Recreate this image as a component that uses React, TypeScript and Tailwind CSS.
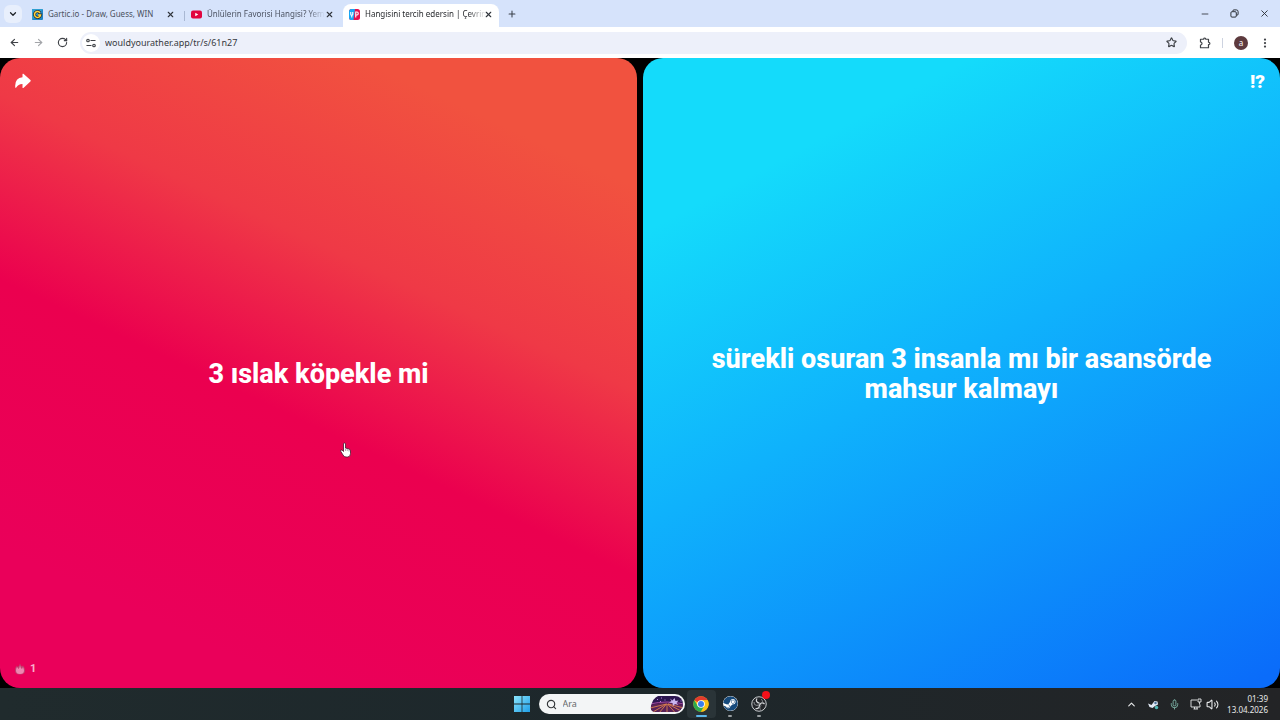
import React, { useState } from 'react';
import { ArrowLeft, ArrowRight, ChevronDown, ChevronUp, EllipsisVertical, Mic, Minus, Plus, RotateCw, Search, Star, Volume2, X } from 'lucide-react';
import { FaSteam } from 'react-icons/fa';

interface Tab {
  id: number;
  title: string;
  icon: React.ReactNode;
}

function GarticIcon() {
  return (
    <svg viewBox="0 0 22 22" className="size-[11px] shrink-0">
      <rect width="22" height="22" rx="2" fill="#1f86c4" />
      <path d="M0 0h22L0 22z" fill="#2f9fd0" />
      <path d="M16 7.5A6 6 0 1 0 17 12h-5" fill="none" stroke="#2b3038" strokeWidth="6" />
      <path d="M16 7.5A6 6 0 1 0 17 12h-5" fill="none" stroke="#ffd83c" strokeWidth="3" />
    </svg>
  );
}

function YoutubeIcon() {
  return (
    <svg viewBox="0 0 22 22" className="size-[11px] shrink-0">
      <rect y="3" width="22" height="16" rx="4" fill="#e1053f" />
      <path d="M8.5 7.5v7l6-3.5z" fill="#fff" />
    </svg>
  );
}

function RatherIcon() {
  return (
    <svg viewBox="0 0 22 22" className="size-[11px] shrink-0">
      <rect width="22" height="22" rx="5" fill="#e6104f" />
      <path d="M5 0h7L9 22H5a5 5 0 0 1-5-5V5a5 5 0 0 1 5-5z" fill="#17a8f5" />
      <path d="M3.5 6v4.5q0 2 2 2t2-2V6M5.5 12.5V17" fill="none" stroke="#fff" strokeWidth="2.2" />
      <path d="M13.5 17V6H16q2.5 0 2.5 3T16 12h-2.5" fill="none" stroke="#fff" strokeWidth="2.2" />
    </svg>
  );
}

function RestoreIcon() {
  return (
    <svg viewBox="0 0 20 20" className="size-[9px]" fill="none" stroke="currentColor" strokeWidth="2.2">
      <rect x="2" y="6" width="12" height="12" rx="2.5" />
      <path d="M6 5q0-3 3-3h5q4 0 4 4v5q0 3-3 3" />
    </svg>
  );
}

function ExtensionIcon() {
  return (
    <svg viewBox="0 0 24 24" className="size-3" fill="none" stroke="currentColor" strokeWidth="2.4">
      <path d="M3 4.5h6.500V4a2 2 0 0 1 4 0v.5H19v6h.5a2 2 0 0 1 0 4.500H19v6.500H3V16a3 3 0 0 0 0-6z" strokeLinejoin="round" />
    </svg>
  );
}

function TuneIcon() {
  return (
    <svg viewBox="0 0 20 20" className="size-[10px]" fill="none" stroke="#3f4247" strokeWidth="2.4">
      <circle cx="4" cy="5" r="2.5" />
      <path d="M9 5h10M1 15h10" />
      <circle cx="16" cy="15" r="2.5" />
    </svg>
  );
}

function ShareIcon() {
  return (
    <svg viewBox="0 0 32 32" className="size-4" fill="currentColor">
      <path d="M15 2.500q0-2 1.800-.8l14 12.500q1.200 1.300 0 2.600l-14 13q-1.800 1.200-1.800-1V22Q7 21.500 2.500 29 1 31 .5 28.500-1 10 15 8.500z" />
    </svg>
  );
}

function FlameIcon() {
  return (
    <svg viewBox="0 0 20 24" className="h-3 w-[10px]">
      <path d="M10 1q1 4 4 6l2-2q4 5 4 10 0 8-10 8T0 15Q0 9 4 5l1 3q4-2 5-7z" fill="#bd4470" />
      <path d="M10 5q1 5 4 7l2-4q2 4 2 7 0 7-8 7t-8-7q0-4 2-7l3 4q2-2 3-7z" fill="#ee86b2" />
    </svg>
  );
}

function WindowsIcon() {
  return (
    <svg viewBox="0 0 16 16" className="size-4">
      <defs>
        <linearGradient id="win" x1="0" y1="0" x2="1" y2="1">
          <stop offset="0" stopColor="#8be4fb" />
          <stop offset="1" stopColor="#1f9fe8" />
        </linearGradient>
      </defs>
      <path d="M0 0h7.6v7.6H0zM8.4 0H16v7.6H8.4zM0 8.4h7.6V16H0zM8.4 8.4H16V16H8.4z" fill="url(#win)" />
    </svg>
  );
}

function ChromeIcon() {
  return (
    <svg viewBox="0 0 48 48" className="size-4">
      <circle cx="24" cy="24" r="23" fill="#fbc116" />
      <path d="M24 24 4.100 12.500A23 23 0 0 1 43.900 12.500H24z" fill="#e33b2e" />
      <path d="M4.100 12.500A23 23 0 0 0 24 47L34 29.700 24 24 14 29.700z" fill="#2da94f" />
      <path d="M24 12.500h19.900A23 23 0 0 1 24 47l10-17.300z" fill="#fbc116" />
      <circle cx="24" cy="24" r="11.5" fill="#fff" />
      <circle cx="24" cy="24" r="9" fill="#3b7ded" />
    </svg>
  );
}

function ObsIcon() {
  return (
    <svg viewBox="0 0 32 32" className="size-4" fill="none">
      <circle cx="16" cy="16" r="14.5" fill="#23262a" stroke="#c9cccf" strokeWidth="2" />
      <path d="M12 5c-3 5 0 9 5 9M27 16c-4-4-9-2-10 3M9 25c6 1 9-3 7-8" stroke="#d5d8da" strokeWidth="2.5" />
      <path d="M6 12c0 6 4 8 9 6M20 6c4 3 4 8 0 10M19 27c-2-2-2-6 1-8" stroke="#8f9396" strokeWidth="2" />
    </svg>
  );
}

// Decorative picture at the end of the search box
function SearchArt() {
  return (
    <svg viewBox="0 0 68 36" className="h-[18px] w-[34px] shrink-0">
      <defs>
        <clipPath id="art">
          <path d="M16 2h34a16 16 0 0 1 0 32H8q-8-3-6-12Q6 6 16 2z" />
        </clipPath>
      </defs>
      <g clipPath="url(#art)">
        <rect width="68" height="36" fill="#2c1650" />
        <path d="M0 20q34-10 68 0v16H0z" fill="#5a2257" />
        <path d="M33 18 6 34M33 18 18 36M34 18v18M35 18l16 18M36 18l28 15M33 18 0 26M36 18l32 8" stroke="#d9814f" strokeWidth="1.8" />
        <path d="M0 18q34-8 68 0" stroke="#a44ba0" strokeWidth="2" fill="none" />
        <path d="M40 7l5 4 4-5 2 6 6-1-4 5 4 4-7-2-4 4-1-6-7-1 5-3z" fill="#c9b5ef" />
        <path d="M14 9h2M22 6h2M29 10h2M20 13h2M61 12h2" stroke="#b389e0" strokeWidth="2" />
      </g>
    </svg>
  );
}

function NetworkIcon() {
  return (
    <svg viewBox="0 0 24 24" className="ml-[10px] size-3" fill="none" stroke="#e8eaeb" strokeWidth="1.8">
      <path d="M14 4H2v14h18v-5M7 22h9M9 18v4M14 18v4" />
      <path d="M16 2h6v6h-6zM19 8v5" />
    </svg>
  );
}

function HandCursor() {
  return (
    <svg viewBox="0 0 22 32" className="h-4 w-[11px]">
      <path
        d="M7 3q2-2 4 0v9l7 2q3 1 3 4v5q0 7-6 7h-3q-4 0-6-4l-5-8q0-3 3-2l3 3z"
        fill="#fff"
        stroke="#4a1730"
        strokeWidth="1.6"
      />
      <path d="M11 13v5M14.500 14v4M18 15v4" stroke="#7c7480" strokeWidth="1.2" />
    </svg>
  );
}

const tabs: Tab[] = [
  { id: 1, title: 'Gartic.io - Draw, Guess, WIN', icon: <GarticIcon /> },
  { id: 2, title: 'Ünlülerin Favorisi Hangisi? Yem', icon: <YoutubeIcon /> },
  { id: 3, title: 'Hangisini tercih edersin | Çevrin', icon: <RatherIcon /> },
];

function TabItem({ tab, active, onSelect }: { tab: Tab; active: boolean; onSelect: () => void }) {
  return (
    <div
      className={
        active
          ? 'flex h-[23px] w-[156px] items-center rounded-t-lg bg-white px-1.5 pb-[3px] text-[#26282c]'
          : 'flex h-[23px] w-[159px] items-center pr-[9px] pb-[3px] pl-[7px] text-[#4b5261]'
      }
    >
      <button onClick={onSelect} className="flex min-w-0 flex-1 items-center gap-[5px]">
        {tab.icon}
        <span className={tab.id === 1 ? 'text-[8px] whitespace-nowrap' : 'mask-r-from-85% text-[8px] whitespace-nowrap'}>{tab.title}</span>
      </button>
      <button aria-label="Sekmeyi kapat" className="text-[#30343b]">
        <X size={9} strokeWidth={3} />
      </button>
    </div>
  );
}

function BrowserChrome() {
  const [activeTab, setActiveTab] = useState(3);
  const [url, setUrl] = useState('wouldyourather.app/tr/s/61n27');

  return (
    <header>
      <div className="flex h-[27px] items-end bg-[#d6e3fb]">
        <button aria-label="Sekme ara" className="mb-1 ml-1 flex size-[18px] items-center justify-center rounded-md bg-[#e8effc] text-[#1f2329]">
          <ChevronDown size={10} strokeWidth={3} />
        </button>
        <nav className="ml-[3px] flex items-center">
          {tabs.map((tab) => (
            <React.Fragment key={tab.id}>
              {tab.id === 2 && <div className="-mr-px h-[10px] w-px bg-[#a9b8d3]" />}
              <TabItem tab={tab} active={tab.id === activeTab} onSelect={() => setActiveTab(tab.id)} />
            </React.Fragment>
          ))}
        </nav>
        <button aria-label="Yeni sekme" className="mb-2 ml-2 text-[#3b404a]">
          <Plus size={10} strokeWidth={2.5} />
        </button>
        <div className="mb-2 ml-auto flex items-center gap-5 pr-[10px] text-[#2b2f36]">
          <button aria-label="Simge durumuna küçült"><Minus size={10} /></button>
          <button aria-label="Geri yükle"><RestoreIcon /></button>
          <button aria-label="Kapat"><X size={11} /></button>
        </div>
      </div>

      <div className="flex h-[31px] items-center bg-white px-[9px] text-[#3f4247]">
        <div className="flex items-center gap-[13px]">
          <button aria-label="Geri"><ArrowLeft size={11} strokeWidth={2.5} /></button>
          <button aria-label="İleri" className="text-[#a3a5a9]"><ArrowRight size={11} strokeWidth={2.5} /></button>
          <button aria-label="Yenile"><RotateCw size={11} strokeWidth={2.5} /></button>
        </div>
        <div className="ml-3 flex h-[22px] flex-1 items-center rounded-full bg-[#edf0fa] pr-[10px] pl-[2px]">
          <button aria-label="Site bilgileri" className="flex size-[18px] items-center justify-center rounded-full bg-white">
            <TuneIcon />
          </button>
          <input
            aria-label="Adres çubuğu"
            value={url}
            onChange={(e) => setUrl(e.target.value)}
            className="ml-[5px] min-w-0 flex-1 bg-transparent text-[9px] text-[#36393e] outline-none"
          />
          <button aria-label="Yer işareti"><Star size={11} strokeWidth={2.5} /></button>
        </div>
        <button aria-label="Uzantılar" className="ml-3">
          <ExtensionIcon />
        </button>
        <div className="mx-[11px] h-[10px] w-px bg-[#cdd3e0]" />
        <button aria-label="Profil" className="flex size-[14px] items-center justify-center rounded-full bg-[#5d3a3e] text-[8px] leading-none text-white">
          a
        </button>
        <button aria-label="Menü" className="ml-[11px]">
          <EllipsisVertical size={12} strokeWidth={2.5} />
        </button>
      </div>
    </header>
  );
}

function Game() {
  return (
    <main className="relative flex flex-1 gap-[6px] bg-black font-[Roboto,sans-serif] text-white">
      <button className="flex flex-1 items-center justify-center rounded-[20px] bg-[linear-gradient(205deg,#f1523f_14%,#ef3946_36%,#eb004f_56%,#ea005a_85%)] px-16 pt-0.5 text-[27px] leading-[30px] font-extrabold">
        3 ıslak köpekle mi
      </button>
      <button className="flex flex-1 items-center justify-center rounded-[20px] bg-[linear-gradient(152deg,#14dbfb_18%,#0fb2fc_48%,#0a6cfa_98%)] px-16 pt-0.5 text-[27px] leading-[30px] font-extrabold">
        sürekli osuran 3 insanla mı bir asansörde mahsur kalmayı
      </button>

      <button aria-label="Paylaş" className="absolute top-[15px] left-[15px]">
        <ShareIcon />
      </button>
      <button aria-label="Seçenekler" className="absolute top-3 right-[15px] text-[19px] leading-6 font-black">
        !?
      </button>
      <div className="absolute bottom-3 left-[15px] flex items-center gap-[5px] text-[11px] leading-[14px] font-bold text-white/70">
        <FlameIcon />
        1
      </div>
      <div className="pointer-events-none absolute top-[61%] left-[340px]">
        <HandCursor />
      </div>
    </main>
  );
}

function Taskbar() {
  return (
    <footer className="grid h-8 grid-cols-[1fr_auto_1fr] items-center bg-linear-to-r from-[#202b2d] via-[#1d272b] to-[#232426] text-[#e8eaeb]">
      <div />
      <div className="flex items-center pl-1">
        <button aria-label="Başlat" className="flex w-[22px] justify-center"><WindowsIcon /></button>
        <label className="ml-[6px] flex h-5 w-[146px] items-center rounded-full bg-[#f3f5f6] pr-px pl-[7px] text-[#33373a]">
          <Search size={11} strokeWidth={2.5} className="shrink-0" />
          <input aria-label="Ara" placeholder="Ara" className="ml-1.5 min-w-0 flex-1 bg-transparent text-[9px] outline-none placeholder:text-[#66696c]" />
          <SearchArt />
        </label>
        <button aria-label="Google Chrome" className="ml-[2px] flex h-7 w-[29px] flex-col items-center justify-between rounded-sm bg-[#2a3438] pt-[6px] pb-px">
          <ChromeIcon />
          <span className="h-[2px] w-[11px] rounded-full bg-[#5cb8ec]" />
        </button>
        <button aria-label="Steam" className="flex h-7 w-[29px] flex-col items-center justify-between pt-[6px] pb-px">
          <FaSteam size={15} className="rounded-full bg-white text-[#164a7c]" />
          <span className="h-[2px] w-1 rounded-full bg-[#9a9fa2]" />
        </button>
        <button aria-label="OBS Studio" className="relative flex h-7 w-[29px] flex-col items-center justify-between pt-[6px] pb-px">
          <ObsIcon />
          <span className="absolute top-[1px] right-1 size-2 rounded-full bg-[#f5101a]" />
          <span className="h-[2px] w-1 rounded-full bg-[#9a9fa2]" />
        </button>
      </div>
      <div className="flex items-center justify-end pr-3">
        <button aria-label="Gizli simgeler"><ChevronUp size={11} strokeWidth={2.5} /></button>
        <svg viewBox="0 0 24 24" className="ml-[10px] size-3">
          <path d="M2 11l7 3 6-8 6 1 1 6-6 3-5 4-6-2z" fill="#e2eaf5" />
          <circle cx="17" cy="10" r="2.5" fill="#50749c" />
          <circle cx="19" cy="19" r="3.5" fill="#4fb7b4" />
        </svg>
        <Mic size={11} className="ml-[10px] text-[#7fb6a8]" />
        <NetworkIcon />
        <Volume2 size={13} className="ml-1" />
        <div className="ml-2 text-right text-[8px] leading-[11px]">
          <div>01:39</div>
          <div>13.04.2026</div>
        </div>
      </div>
    </footer>
  );
}

export default function App() {
  return (
    <div className="flex min-h-screen flex-col font-['Noto_Sans','Open_Sans',sans-serif]">
      <BrowserChrome />
      <Game />
      <Taskbar />
    </div>
  );
}
